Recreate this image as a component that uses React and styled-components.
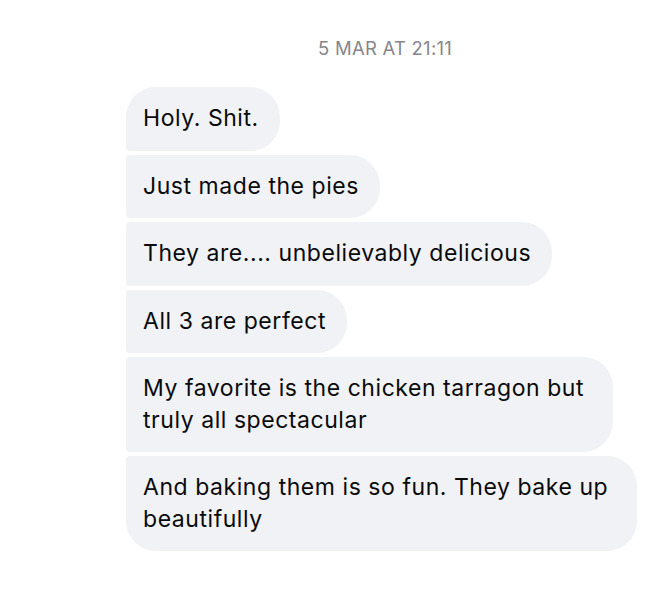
import React from "react";
import styled, { createGlobalStyle } from "styled-components";

const GlobalStyle = createGlobalStyle`
  html, body {
    margin: 0;
    padding: 0;
    background: #ffffff;
  }
  body {
    font-family: "Inter", "Liberation Sans", Arial, sans-serif;
    -webkit-font-smoothing: antialiased;
  }
`;

const Page = styled.div`
  width: 670px;
  height: 608px;
  box-sizing: border-box;
  display: flex;
  flex-direction: column;
  padding-top: 38px;
  background: #ffffff;
`;

const Timestamp = styled.div`
  align-self: center;
  margin-left: 100px;
  font-size: 18.5px;
  line-height: 20px;
  color: #86868b;
  letter-spacing: 0.25px;
`;

const Group = styled.div`
  display: flex;
  flex-direction: column;
  align-items: flex-start;
  gap: 4px;
  padding-left: 126px;
  margin-top: 29px;
`;

const Bubble = styled.div`
  box-sizing: border-box;
  padding: 16px ${({ $wide }) => ($wide ? "29px" : "21px")} 16px 17px;
  font-size: 23px;
  line-height: 31.5px;
  color: #0a0a0a;
  background: #f1f2f6;
  white-space: nowrap;
  border-radius: ${({ $first }) => ($first ? "30px" : "4px")} 30px 30px
    ${({ $last }) => ($last ? "30px" : "4px")};
  letter-spacing: 0.55px;
`;

const Line = styled.span`
  display: block;
`;

const messages = [
  ["Holy. Shit."],
  ["Just made the pies"],
  ["They are.... unbelievably delicious"],
  ["All 3 are perfect"],
  ["My favorite is the chicken tarragon but", "truly all spectacular"],
  ["And baking them is so fun. They bake up", "beautifully"],
];

export default function App() {
  return (
    <>
      <GlobalStyle />
      <Page>
        <Timestamp>5 MAR AT 21:11</Timestamp>
        <Group>
          {messages.map((lines, i) => (
            <Bubble
              key={i}
              $first={i === 0}
              $last={i === messages.length - 1}
              $wide={lines.length > 1}
            >
              {lines.map((l, j) => (
                <Line key={j}>{l}</Line>
              ))}
            </Bubble>
          ))}
        </Group>
      </Page>
    </>
  );
}
